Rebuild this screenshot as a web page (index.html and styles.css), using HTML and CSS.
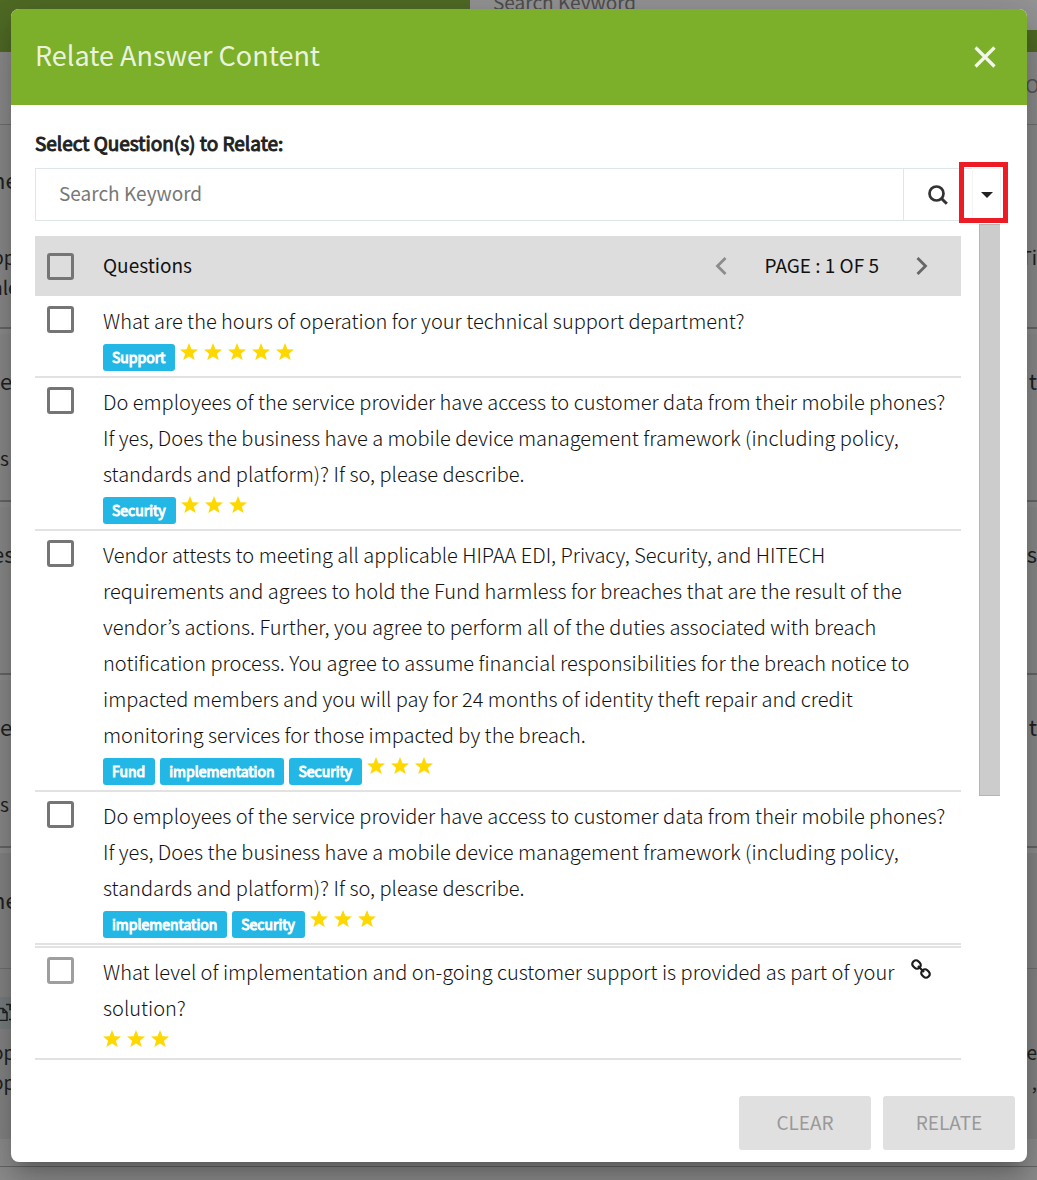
FILE: index.html
```html
<!DOCTYPE html>
<html lang="en">
<head>
<meta charset="utf-8">
<title>Relate Answer Content</title>
<link rel="stylesheet" href="styles.css">
</head>
<body>
<svg class="defs" aria-hidden="true">
  <symbol id="star" viewBox="0 0 24 24"><path d="M12 0l3.3 8.3 8.7.4-6.800 5.500 2.400 8.600-7.600-4.900-7.600 4.900 2.400-8.600L0 8.700l8.700-.4z"/></symbol>
</svg>
<div class="screen">
  <div class="page" aria-hidden="true">
    <div class="page-bar"><div class="page-search">Search Keyword</div></div>
    <div class="page-tools"><span>OU</span></div>
    <div class="card"><p class="lead cut"><span>ne</span></p><p class="cut"><span>pp</span><span>Ti</span></p><p class="cut"><span>ale</span></p></div>
    <div class="card"><p class="lead"><span>e</span><span>t</span></p><p><span>s</span></p></div>
    <div class="card"><p class="lead cut"><span>es</span><span>s</span></p></div>
    <div class="card"><p class="lead"><span>e</span><span>t</span></p><p><span>s</span></p></div>
    <div class="card open">
      <p class="lead cut"><span>ne</span></p>
      <div class="card-detail">
        <div class="copy"><svg width="36" height="18" viewBox="0 0 36 18"><path d="M-8 5.500H3l4 4v8H-8M3 5.500v4h4M6 1.500h4l5 5v10H9M10 1.500v5h5M17 1.500h12v15H17z" fill="none" stroke="#222" stroke-width="1.500"/></svg></div>
        <p class="cut"><span>op</span><span>e</span></p>
        <p class="cut"><span>op</span><span>,</span></p>
      </div>
    </div>
    <div class="page-end"></div>
  </div>

  <div class="backdrop">
    <div class="modal" role="dialog" aria-labelledby="title">
      <header class="modal-head">
        <h1 id="title">Relate Answer Content</h1>
        <button class="close" type="button" aria-label="Close"><svg width="24" height="24" viewBox="0 0 24 24"><path d="M2.500 2.500l19 19M21.500 2.500l-19 19" stroke="#fff" stroke-opacity=".9" stroke-width="3.200"/></svg></button>
      </header>

      <div class="modal-body">
        <label class="field-label" for="keyword">Select Question(s) to Relate:</label>
        <div class="search">
          <input id="keyword" class="search-input" type="text" placeholder="Search Keyword">
          <button class="search-btn" type="button" aria-label="Search"><svg width="20" height="20" viewBox="0 0 20 20" fill="none" stroke="#333"><circle cx="8.500" cy="8.500" r="7" stroke-width="2.700"/><path d="M13.500 13.500l5.300 5.300" stroke-width="3"/></svg></button>
          <div class="more">
            <button class="more-btn" type="button" aria-label="More filters"><svg width="12" height="6" viewBox="0 0 12 6"><path d="M0 0h12L6 6z" fill="#222"/></svg></button>
            <div class="highlight"></div>
          </div>
        </div>

        <div class="results">
          <div class="list">
            <div class="list-head">
              <input id="all" class="tick" type="checkbox">
              <label for="all">Questions</label>
              <div class="pager">
                <button class="prev" type="button" aria-label="Previous page"><svg width="12" height="18" viewBox="0 0 12 18"><path d="M10.500 1L2.500 9l8 8" fill="none" stroke="#8c8c8c" stroke-width="2.800"/></svg></button>
                <span>PAGE : 1 OF 5</span>
                <button class="next" type="button" aria-label="Next page"><svg width="12" height="18" viewBox="0 0 12 18"><path d="M1.500 1l8 8-8 8" fill="none" stroke="#666" stroke-width="2.800"/></svg></button>
              </div>
            </div>
            <ul class="rows">
              <li class="row">
                <input id="q1" class="tick" type="checkbox">
                <div class="question">
                  <label for="q1">What are the hours of operation for your technical support department?</label>
                  <div class="info"><span class="tag">Support</span><span class="stars"><svg><use href="#star"/></svg><svg><use href="#star"/></svg><svg><use href="#star"/></svg><svg><use href="#star"/></svg><svg><use href="#star"/></svg></span></div>
                </div>
              </li>
              <li class="row">
                <input id="q2" class="tick" type="checkbox">
                <div class="question">
                  <label for="q2">Do employees of the service provider have access to customer data from their mobile phones? If yes, Does the business have a mobile device management framework (including policy, standards and platform)? If so, please describe.</label>
                  <div class="info"><span class="tag">Security</span><span class="stars"><svg><use href="#star"/></svg><svg><use href="#star"/></svg><svg><use href="#star"/></svg></span></div>
                </div>
              </li>
              <li class="row">
                <input id="q3" class="tick" type="checkbox">
                <div class="question">
                  <label for="q3">Vendor attests to meeting all applicable HIPAA EDI, Privacy, Security, and HITECH requirements and agrees to hold the Fund harmless for breaches that are the result of the vendor’s actions. Further, you agree to perform all of the duties associated with breach notification process. You agree to assume financial responsibilities for the breach notice to impacted members and you will pay for 24 months of identity theft repair and credit monitoring services for those impacted by the breach.</label>
                  <div class="info"><span class="tag">Fund</span><span class="tag">implementation</span><span class="tag">Security</span><span class="stars"><svg><use href="#star"/></svg><svg><use href="#star"/></svg><svg><use href="#star"/></svg></span></div>
                </div>
              </li>
              <li class="row">
                <input id="q4" class="tick" type="checkbox">
                <div class="question">
                  <label for="q4">Do employees of the service provider have access to customer data from their mobile phones? If yes, Does the business have a mobile device management framework (including policy, standards and platform)? If so, please describe.</label>
                  <div class="info"><span class="tag">implementation</span><span class="tag">Security</span><span class="stars"><svg><use href="#star"/></svg><svg><use href="#star"/></svg><svg><use href="#star"/></svg></span></div>
                </div>
              </li>
              <li class="row linked">
                <input id="q5" class="tick" type="checkbox" disabled>
                <div class="question">
                  <label for="q5">What level of implementation and on-going customer support is provided as part of your solution?</label>
                  <div class="info"><span class="stars"><svg><use href="#star"/></svg><svg><use href="#star"/></svg><svg><use href="#star"/></svg></span></div>
                </div>
                <svg class="link" width="20" height="20" viewBox="0 0 20 20" fill="none" stroke="#1c1c1c" stroke-width="2.200"><rect x="-4.300" y="-3.600" width="8.600" height="7.200" rx="3.200" transform="translate(5.500 5.500) rotate(45)"/><rect x="-4.300" y="-3.600" width="8.600" height="7.200" rx="3.200" transform="translate(14.500 14.500) rotate(45)"/><path d="M7 7l6 6"/></svg>
              </li>
            </ul>
          </div>
          <div class="scrollbar"></div>
        </div>
      </div>

      <footer class="modal-foot">
        <button class="action" type="button" disabled>CLEAR</button>
        <button class="action" type="button" disabled>RELATE</button>
      </footer>
    </div>
  </div>
</div>
</body>
</html>
```
FILE: styles.css
```css
* { box-sizing: border-box; }
body, h1, p, ul { margin: 0; padding: 0; }
body {
  font-family: "Noto Sans CJK JP", "Noto Sans", sans-serif;
  font-size: 19px;
  line-height: 30px;
  color: #222;
}
button, input { font: inherit; margin: 0; }
button { display: flex; align-items: center; justify-content: center; padding: 0; border: 0; background: none; }
svg { display: block; flex: none; }
.defs { position: absolute; width: 0; height: 0; }

.screen { display: grid; min-height: 100vh; overflow: hidden; }
.page, .backdrop { grid-area: 1 / 1; min-width: 0; }

/* page behind the dialog */
.page { background: #f4f4f4; overflow: hidden; }
.page-bar { display: flex; align-items: flex-start; justify-content: flex-end; height: 52px; background: #7caf2a; }
.page-search { width: 567px; height: 30px; padding: 0 23px; background: #fff; line-height: 4px; color: #777; }
.page-tools { display: flex; justify-content: flex-end; height: 73px; padding-top: 18px; background: #f0f0f0; border-bottom: 1px solid #bbb; color: #888; }
.page-tools span { margin-right: -16px; }
.card { min-height: 168px; margin-bottom: 5px; padding-top: 31px; background: #eee; border-bottom: 2px solid #aaa; }
.card:nth-child(3) { min-height: 204px; padding-top: 39px; }
.card p { display: flex; justify-content: space-between; }
.card .lead { margin-bottom: 48px; font-size: 22px; }
.card .cut { margin-left: -8px; }
.card.open { min-height: 286px; background: #e2e2e2; border: 0; }
.card.open .lead { margin-bottom: 54px; }
.card-detail { padding-top: 28px; border-top: 1px solid #bbb; }
.copy { width: 50%; height: 32px; margin-bottom: 8px; padding-top: 6px; background: #ccd6da; }
.page-end { margin-top: 27px; border-top: 1px solid #aaa; }

/* dialog */
.backdrop { padding: 9px 10px 17px 11px; background: rgba(33, 33, 33, .48); }
.modal {
  display: flex;
  flex-direction: column;
  overflow: hidden;
  border-radius: 8px;
  background: #fff;
  box-shadow: 0 11px 15px -7px rgba(0, 0, 0, .2), 0 24px 38px 3px rgba(0, 0, 0, .14), 0 9px 46px 8px rgba(0, 0, 0, .12);
}
.modal-head { display: flex; align-items: center; justify-content: space-between; height: 96px; padding: 0 30px 0 24px; background: #7caf2a; }
.modal-head h1 { padding-bottom: 4px; font-size: 27px; font-weight: 400; line-height: 40px; color: rgba(255, 255, 255, .87); }
.modal-body { padding: 23px 26px 0 24px; }
.field-label { display: block; margin-bottom: 10px; -webkit-text-stroke: 1px currentColor; }

.search { display: flex; height: 53px; }
.search-input { flex: 1; min-width: 0; padding: 0 24px 3px 23px; border: 1px solid #dde6e9; background: #fff; color: #333; }
.search-input::placeholder { color: #777; opacity: 1; }
.search-btn { width: 68px; border: solid #dde6e9; border-width: 1px 0; }
.more { position: relative; display: flex; width: 29px; }
.more-btn { flex: 1; border: 1px solid #f5f5f5; border-radius: 3px; }
.highlight { position: absolute; inset: -6px -7px -2px -13px; border: 5px solid #ed1c24; }

.results { display: flex; align-items: flex-start; gap: 18px; }
.scrollbar { width: 21px; height: 572px; margin: 3px 1px 0 0; border: solid #b5b5b5; border-width: 1px 0 1px 1px; background: #ccc; }
.list { flex: 1; min-width: 0; padding-top: 15px; }
.list-head, .row { display: flex; padding-left: 12px; }
.list-head { align-items: center; gap: 29px; height: 60px; margin-bottom: 1px; padding-right: 33px; background: #ddd; color: #111; }
.list-head label, .pager span { padding-bottom: 3px; }
.pager { display: flex; align-items: center; gap: 37px; margin-left: auto; }
.tick { flex: none; width: 27px; height: 27px; appearance: none; border: 3px solid #757575; border-radius: 3px; }
.tick:disabled { border-color: #9e9e9e; }

.rows { list-style: none; }
.row { align-items: flex-start; gap: 29px; padding-top: 6px; padding-right: 14px; border-bottom: 2px solid #e2e2e2; }
.row .tick { margin-top: 3px; }
.question { flex: 1; min-width: 0; font-size: 20px; font-weight: 300; line-height: 36px; color: #111; }
.question label { display: block; }
.info { display: flex; gap: 5px; padding: 5px 0; }
.tag { height: 27px; padding: 0 10px 0 9px; border-radius: 3px; background: #23b7e5; font-size: 14px; font-weight: 400; line-height: 26px; color: #fff; -webkit-text-stroke: 1px currentColor; }
.stars { display: flex; gap: 6px; }
.stars svg { width: 18px; height: 18px; margin-top: -1px; fill: #ffd800; }
.linked { margin-top: 1px; padding-right: 30px; border-top: 2px solid #e2e2e2; gap: 0; }
.linked .question { margin: 0 14px 0 29px; }
.linked .info { padding-bottom: 10px; }
.link { margin-top: 5px; }

.modal-foot { display: flex; justify-content: flex-end; gap: 12px; padding: 36px 12px 12px; }
.action { width: 132px; height: 54px; padding-bottom: 3px; border-radius: 3px; background: #e0e0e0; color: #999; }
```
